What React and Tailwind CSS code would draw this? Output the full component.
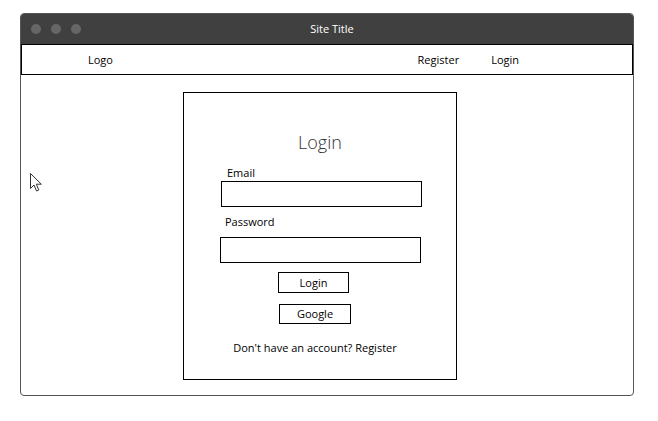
export default function App() {
  return (
    <div className="w-[658px] h-[421px] bg-white relative" style={{ fontFamily: '"Open Sans", "Noto Sans", sans-serif' }}>
      <div className="absolute left-[30px] top-[173px] pointer-events-none">
        <svg width="14" height="20" viewBox="0 0 14 20">
          <path d="M0.5 0.5 L0.5 15.5 L4 12 L6.5 18 L8.8 17 L6.3 11.2 L11.3 11.2 Z" fill="white" stroke="#333" strokeWidth="1" strokeLinejoin="miter" />
        </svg>
      </div>
      <div className="pt-[13px] pl-[20px]">
        <div className="w-[614px] h-[383px] border border-[#555] rounded-[4px] overflow-hidden flex flex-col">
          <div className="h-[30px] bg-[#404040] flex items-center relative shrink-0">
            <div className="flex gap-[10px] pl-[10px]">
              <div className="w-[10px] h-[10px] rounded-full bg-[#666]" />
              <div className="w-[10px] h-[10px] rounded-full bg-[#666]" />
              <div className="w-[10px] h-[10px] rounded-full bg-[#666]" />
            </div>
            <div className="absolute inset-0 flex items-center justify-center text-white text-[11px] pl-[10px]">Site Title</div>
          </div>
          <div className="h-[31px] border border-black flex items-center text-[11px] text-black shrink-0 pt-[2px]">
            <div className="ml-[66px]">Logo</div>
            <div className="ml-auto mr-[113px] flex gap-[32px]">
              <span>Register</span>
              <span>Login</span>
            </div>
          </div>
          <div className="flex-1 pl-[162px] pt-[17px]">
            <div className="w-[274px] h-[288px] border border-black flex flex-col text-[11px] text-black">
              <div className="mt-[37px] h-[24px] leading-[24px] text-center text-[18px] font-light text-[#333]">Login</div>
              <div className="mt-[11px] h-[16px] leading-[16px] pl-[43px]">Email</div>
              <div className="ml-[37px] w-[201px] h-[26px] border border-black" />
              <div className="mt-[7px] h-[16px] leading-[16px] pl-[41px]">Password</div>
              <div className="mt-[7px] ml-[36px] w-[201px] h-[26px] border border-black" />
              <div className="mt-[9px] ml-[94px] w-[71px] h-[21px] border border-black flex items-center justify-center pt-[1px]">Login</div>
              <div className="mt-[11px] ml-[95px] w-[72px] h-[20px] border border-black flex items-center justify-center pt-[1px]">Google</div>
              <div className="mt-[16px] h-[16px] leading-[16px] text-center pr-[10px]">Don't have an account? Register</div>
            </div>
          </div>
        </div>
      </div>
    </div>
  );
}
